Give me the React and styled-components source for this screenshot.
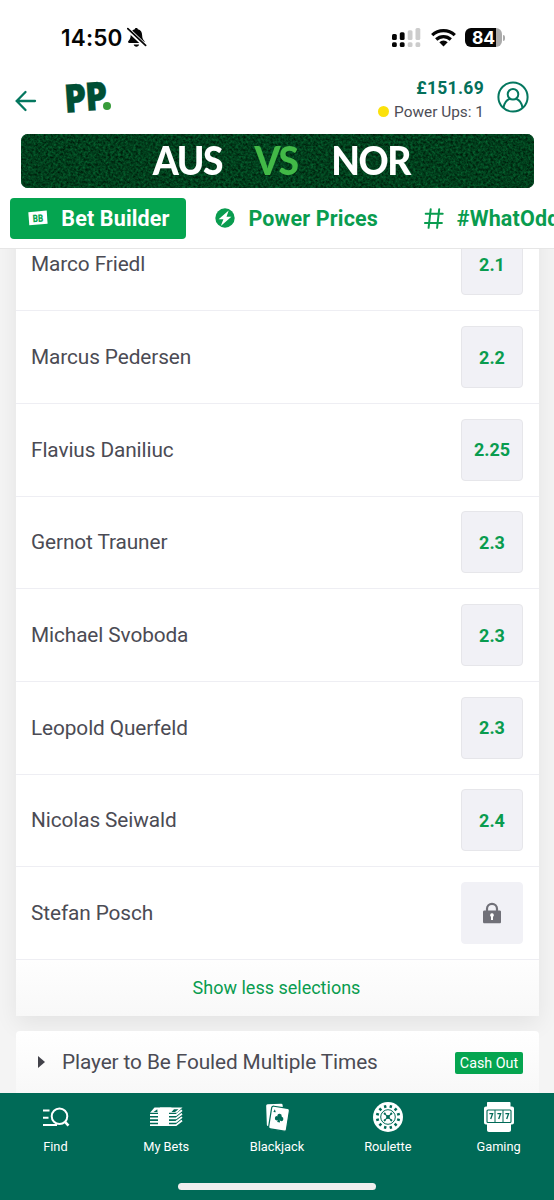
import React from "react";
import styled, { createGlobalStyle } from "styled-components";

const selections = [
  { name: "Marco Friedl", odds: "2.1" },
  { name: "Marcus Pedersen", odds: "2.2" },
  { name: "Flavius Daniliuc", odds: "2.25" },
  { name: "Gernot Trauner", odds: "2.3" },
  { name: "Michael Svoboda", odds: "2.3" },
  { name: "Leopold Querfeld", odds: "2.3" },
  { name: "Nicolas Seiwald", odds: "2.4" },
  { name: "Stefan Posch", locked: true },
];

const BellOffIcon = () => (
  <svg width="20" height="21" viewBox="0 0 20 21">
    <path
      d="M9.300 1c.9 0 1.400.5 1.500 1.200 3 .7 4.200 3 4.300 5.800.1 3.600 1 4.600 2.200 6 .7.800.3 2-.9 2H2.300c-1.200 0-1.700-1.100-.9-2 1.200-1.400 2.200-2.400 2.300-6C3.800 5.200 5 2.900 7.800 2.200 7.900 1.500 8.400 1 9.300 1zM6.700 17.500h5.400c-.3 1.400-1.300 2.200-2.700 2.200s-2.400-.8-2.700-2.200z"
      fill="#050505"
    />
    <path d="M0 1.500l18.500 17.500" stroke="#fff" strokeWidth="4.200" />
    <path d="M.8 1.600l17.800 16.800" stroke="#050505" strokeWidth="1.700" strokeLinecap="round" />
  </svg>
);

const SignalIcon = () => (
  <svg width="29" height="20" viewBox="0 0 29 20">
    <g fill="#050505">
      <rect x="0" y="6" width="4.800" height="6" rx="1.500" />
      <rect x="7.800" y="4.300" width="4.800" height="7.700" rx="1.500" />
      <rect x="0" y="14.300" width="4.800" height="4.800" rx="1.500" />
      <rect x="7.800" y="14.300" width="4.800" height="4.800" rx="1.500" />
    </g>
    <g fill="#ccc">
      <rect x="15.700" y="2.200" width="4.800" height="9.800" rx="1.500" />
      <rect x="23.500" y="0" width="4.800" height="12" rx="1.500" />
      <rect x="15.700" y="14.300" width="4.800" height="4.800" rx="1.500" />
      <rect x="23.500" y="14.300" width="4.800" height="4.800" rx="1.500" />
    </g>
  </svg>
);

const WifiIcon = () => (
  <svg width="25" height="19" viewBox="0 0 25 19">
    <g fill="none" stroke="#050505" strokeWidth="3.200">
      <path d="M1.200 7.200a16.200 16.200 0 0 1 22.600 0" />
      <path d="M5.200 11.500a10.500 10.500 0 0 1 14.600 0" />
    </g>
    <path d="M8.300 14.300a6.100 6.100 0 0 1 8.400 0l-4.200 4.200z" fill="#050505" />
  </svg>
);

const BackIcon = () => (
  <svg width="22" height="22" viewBox="0 0 22 22" fill="none" stroke="#04775f" strokeWidth="2.300" strokeLinecap="round">
    <path d="M20 11H2M10.500 2L1.700 11l8.800 9" />
  </svg>
);

const UserIcon = () => (
  <svg width="32" height="32" viewBox="0 0 32 32" fill="none" stroke="#04775f" strokeWidth="2">
    <circle cx="16" cy="16" r="14.600" />
    <circle cx="16" cy="13.200" r="5.300" />
    <path d="M6.500 26.700c.7-4.800 3.100-7.700 6.300-9M25.500 26.700c-.7-4.800-3.100-7.700-6.300-9" />
  </svg>
);

const GrassTexture = () => (
  <Grass width="513" height="54">
    <filter id="grass" x="0" y="0" width="100%" height="100%" colorInterpolationFilters="sRGB">
      <feTurbulence type="fractalNoise" baseFrequency="0.4" numOctaves="3" seed="7" />
      <feColorMatrix
        values="0.05 0 0 0 -0.02
                0.42 0 0 0 0.035
                0.22 0 0 0 0
                0 0 0 0 1"
      />
    </filter>
    <rect width="513" height="54" filter="url(#grass)" />
  </Grass>
);

const BetBuilderIcon = () => (
  <svg width="20" height="16" viewBox="0 0 20 16">
    <path d="M.3 2.200L18.700.4l.9 13.300-18.300 1.600z" fill="#fff" />
    <text
      x="4.700"
      y="12"
      fontFamily="Roboto, sans-serif"
      fontWeight="900"
      fontSize="10.500"
      textLength="10.500"
      lengthAdjust="spacingAndGlyphs"
      fill="#05a550"
      transform="rotate(-4 10 8)"
    >
      BB
    </text>
  </svg>
);

const BoltIcon = () => (
  <svg width="20" height="20" viewBox="0 0 20 20">
    <circle cx="10" cy="10" r="9.700" fill="#099c4f" />
    <path d="M13.700 2.500L3.600 11.300h4.800l-2.600 6.800 10.600-9.300h-4.900z" fill="#fff" />
  </svg>
);

const HashIcon = () => (
  <svg width="20" height="21" viewBox="0 0 20 21" stroke="#099c4f" strokeWidth="2" strokeLinecap="round">
    <path d="M6.700 1.200L4.600 19.800M15.200 1.200l-2.100 18.600M1.700 5.700h17M.9 15h17" />
  </svg>
);

const LockIcon = () => (
  <svg width="18" height="22" viewBox="0 0 18 22">
    <path d="M4 9V6.800a5 5 0 0 1 10 0V9" fill="none" stroke="#707078" strokeWidth="2.200" />
    <path
      d="M1.500 8.500h15c1 0 1.500.5 1.500 1.500v9.800c0 1-.5 1.500-1.500 1.500h-15c-1 0-1.500-.5-1.500-1.500V10c0-1 .5-1.500 1.500-1.500z"
      fill="#707078"
    />
    <path d="M9 11.300a1.900 1.900 0 0 1 1 3.500V18H8v-3.200a1.900 1.900 0 0 1 1-3.500z" fill="#fff" />
  </svg>
);

const FindIcon = () => (
  <svg width="32" height="32" viewBox="0 0 32 32" fill="none" stroke="#fff">
    <circle cx="20.500" cy="15.200" r="7.800" strokeWidth="2" />
    <path d="M25.800 20.600l3.700 4" strokeWidth="2.600" />
    <path d="M4 9.600h6.500M4 16.800h5.500M4 24h14" strokeWidth="2" />
  </svg>
);

const MyBetsIcon = () => (
  <svg width="34" height="32" viewBox="0 0 34 32">
    <path d="M5.500 6.500h28l-5.500 5.300H1z" fill="#fff" />
    <path d="M8.300 8.300l-3.800 2.600h4zM25 8.300h4.500l-3.500 2.600h-3.500z" fill="#006a57" />
    <g stroke="#fff" strokeWidth="1.800" fill="none">
      <path d="M1 14h26l6-4.700M1 17.400h26l6-4.700M1 20.800h26l6-4.700M1 24.200h26l6-4.700" />
    </g>
    <path d="M11 6.500h11.500l-2.500 5v13.600H9V11.500z" fill="#fff" />
  </svg>
);

const BlackjackIcon = () => (
  <svg width="32" height="32" viewBox="0 0 32 32">
    <rect x="5.500" y="3" width="16.500" height="22" rx="1.500" fill="#fff" transform="rotate(-2 14 14)" />
    <rect
      x="9"
      y="6.200"
      width="18"
      height="23"
      rx="2"
      fill="#fff"
      stroke="#006a57"
      strokeWidth="1.200"
      transform="rotate(9 18 18)"
    />
    <g fill="#006a57" transform="rotate(8 18 17)">
      <circle cx="18.200" cy="14.900" r="2.200" />
      <circle cx="16.100" cy="17.600" r="2.200" />
      <circle cx="20.300" cy="17.600" r="2.200" />
      <path d="M18.200 16l1.500 5.200h-3z" />
      <path d="M11.500 11.800l1.200-2.800 1.300 2.800z" />
    </g>
  </svg>
);

const dots = [0, 30, 60, 90, 120, 150, 180, 210, 240, 270, 300, 330];

const RouletteIcon = () => (
  <svg width="32" height="32" viewBox="0 0 32 32">
    <circle cx="16" cy="16" r="15" fill="#fff" />
    {dots.map((angle) => (
      <rect
        key={angle}
        x="14.800"
        y="3.800"
        width="2.400"
        height="2.800"
        fill="#006a57"
        transform={`rotate(${angle + 15} 16 16)`}
      />
    ))}
    <circle cx="16" cy="16" r="7.300" fill="none" stroke="#006a57" strokeWidth="1" />
    <path d="M12.800 12.800l6.400 6.400M19.200 12.800l-6.400 6.400" stroke="#006a57" strokeWidth="1.100" />
    <g fill="#006a57">
      <circle cx="16" cy="16" r="1.900" />
      <circle cx="12.700" cy="12.700" r="1.100" />
      <circle cx="19.300" cy="12.700" r="1.100" />
      <circle cx="12.700" cy="19.300" r="1.100" />
      <circle cx="19.300" cy="19.300" r="1.100" />
    </g>
  </svg>
);

const GamingIcon = () => (
  <svg width="32" height="32" viewBox="0 0 32 32">
    <path
      d="M5 1h21.500c.7 0 1 .3 1 1v3.500h1.500c1.200 0 2 .8 2 2v14c0 1.200-.8 2-2 2h-1V29c0 1.200-.8 2-2 2H6c-1.200 0-2-.8-2-2v-5.500H3c-1.200 0-2-.8-2-2v-14c0-1.200.8-2 2-2h1V2c0-.7.3-1 1-1z"
      fill="#fff"
    />
    <rect x="4" y="9" width="24" height="12.500" rx="1" fill="#fff" stroke="#006a57" strokeWidth="1.100" />
    <path d="M12 9v12.500M20 9v12.500" stroke="#006a57" strokeWidth="1" />
    <path
      d="M6.400 12.700h3.200l-1.900 5.300M14.400 12.700h3.200l-1.900 5.300M22.400 12.700h3.200l-1.900 5.300"
      fill="none"
      stroke="#006a57"
      strokeWidth="1.300"
    />
  </svg>
);

const navItems = [
  { label: "Find", Icon: FindIcon },
  { label: "My Bets", Icon: MyBetsIcon },
  { label: "Blackjack", Icon: BlackjackIcon },
  { label: "Roulette", Icon: RouletteIcon },
  { label: "Gaming", Icon: GamingIcon },
];

const App = () => {
  return (
    <StyledScreen>
      <GlobalStyle />
      <StatusBar>
        <Clock>14:50</Clock>
        <BellOffIcon />
        <StatusIcons>
          <SignalIcon />
          <WifiIcon />
          <Battery>
            <BatteryBody>84</BatteryBody>
            <BatteryTip />
          </Battery>
        </StatusIcons>
      </StatusBar>

      <Header>
        <BackIcon />
        <Logo>
          <LogoLetter>P</LogoLetter>
          <LogoLetter $raised>P</LogoLetter>
          <LogoDot />
        </Logo>
        <Account>
          <Balance>£151.69</Balance>
          <PowerUps>
            <Coin />
            Power Ups: 1
          </PowerUps>
        </Account>
        <Profile>
          <UserIcon />
        </Profile>
      </Header>

      <Banner>
        <GrassTexture />
        <Team $width="69px">AUS</Team>
        <Team $width="44px" $green>
          VS
        </Team>
        <Team $width="81px">NOR</Team>
      </Banner>

      <Tabs>
        <Tab $active>
          <BetBuilderIcon />
          Bet Builder
        </Tab>
        <Tab>
          <BoltIcon />
          Power Prices
        </Tab>
        <Tab>
          <HashIcon />
          #WhatOddsPaddy
        </Tab>
      </Tabs>

      <Content>
        <Card>
          {selections.map(({ name, odds, locked }) => (
            <Row key={name}>
              <Player>{name}</Player>
              <Odds $locked={locked}>{locked ? <LockIcon /> : odds}</Odds>
            </Row>
          ))}
          <ShowLess>Show less selections</ShowLess>
        </Card>
        <Market>
          <Caret />
          <MarketName>Player to Be Fouled Multiple Times</MarketName>
          <CashOut>Cash Out</CashOut>
        </Market>
      </Content>

      <BottomNav>
        <NavItems>
          {navItems.map(({ label, Icon }) => (
            <NavItem key={label}>
              <Icon />
              {label}
            </NavItem>
          ))}
        </NavItems>
        <HomeIndicator />
      </BottomNav>
    </StyledScreen>
  );
};

export default App;

const GlobalStyle = createGlobalStyle`
  * {
    box-sizing: border-box;
  }
  body {
    margin: 0;
    background: #fff;
  }
  svg {
    display: block;
    flex-shrink: 0;
  }
`;

const StyledScreen = styled.div`
  width: 554px;
  height: 1200px;
  display: flex;
  flex-direction: column;
  overflow: hidden;
  background: #fff;
  font-family: Roboto, "Liberation Sans", sans-serif;
`;

const StatusBar = styled.div`
  height: 75px;
  flex-shrink: 0;
  display: flex;
  align-items: center;
  padding: 0 49px 0 61px;
`;

const Clock = styled.span`
  width: 66px;
  font-family: Inter, sans-serif;
  font-size: 22.5px;
  font-weight: 600;
  letter-spacing: 0.2px;
  color: #050505;
`;

const StatusIcons = styled.div`
  margin-left: auto;
  display: flex;
  align-items: center;
  gap: 9.5px;
`;

const Battery = styled.div`
  display: flex;
  align-items: center;
  gap: 1px;
`;

const BatteryBody = styled.div`
  width: 37px;
  height: 19px;
  border-radius: 6px;
  background: linear-gradient(90deg, #050505 31px, #aaa 31px);
  color: #fff;
  font-family: Inter, sans-serif;
  font-size: 17.5px;
  font-weight: 700;
  line-height: 19px;
  text-align: center;
`;

const BatteryTip = styled.div`
  width: 2px;
  height: 6px;
  border-radius: 0 2px 2px 0;
  background: #aaa;
`;

const Header = styled.header`
  height: 58px;
  flex-shrink: 0;
  display: flex;
  align-items: center;
  padding: 0 25px 7px 15px;
`;

const Logo = styled.div`
  display: flex;
  align-items: flex-end;
  margin: -7px 0 0 27px;
`;

const LogoLetter = styled.span`
  width: 20.5px;
  margin-bottom: ${({ $raised }) => ($raised ? "2px" : "0")};
  transform: rotate(-4deg) scaleX(0.9);
  transform-origin: left center;
  font-family: "Open Sans", sans-serif;
  font-weight: 800;
  font-size: 39.5px;
  line-height: 38px;
  color: #004f35;
  -webkit-text-stroke: 0.3px #004f35;
`;

const LogoDot = styled.i`
  width: 8px;
  height: 8px;
  margin: 0 0 7px -2px;
  border-radius: 50%;
  background: #389c3b;
`;

const Account = styled.div`
  margin: -2px 13px 0 auto;
  display: flex;
  flex-direction: column;
  align-items: flex-end;
`;

const Balance = styled.div`
  font-size: 17.5px;
  line-height: 24px;
  font-weight: 700;
  letter-spacing: 0.3px;
  color: #04705a;
`;

const PowerUps = styled.div`
  display: flex;
  align-items: center;
  gap: 5px;
  font-size: 15.4px;
  line-height: 24px;
  color: #4d4d55;
`;

const Coin = styled.i`
  width: 11px;
  height: 11px;
  border-radius: 50%;
  background: #fbe10b;
`;

const Profile = styled.div`
  padding-bottom: 7px;
`;

const Banner = styled.div`
  position: relative;
  width: 513px;
  height: 54px;
  flex-shrink: 0;
  margin: 0.5px 0 0 20.5px;
  display: flex;
  justify-content: center;
  gap: 32px;
  padding-left: 10px;
  border-radius: 7px;
  overflow: hidden;
  background: #023f1e;
`;

const Grass = styled.svg`
  position: absolute;
  inset: 0;
`;

const Team = styled.span`
  position: relative;
  width: ${({ $width }) => $width};
  display: flex;
  justify-content: center;
  transform: scaleX(0.94);
  font-family: Lato, sans-serif;
  font-size: 39.5px;
  font-weight: 900;
  line-height: 51px;
  letter-spacing: -1.5px;
  color: ${({ $green }) => ($green ? "#42b947" : "#fff")};
`;

const Tabs = styled.nav`
  height: 61px;
  flex-shrink: 0;
  display: flex;
  gap: 11.5px;
  padding: 10px 0 0 10px;
  border-bottom: 1px solid #e6e6e6;
  overflow: hidden;
`;

const Tab = styled.div`
  height: 41.5px;
  flex-shrink: 0;
  display: flex;
  align-items: center;
  gap: 13px;
  padding: 0 16px 0 18.3px;
  border-radius: 4px;
  background: ${({ $active }) => ($active ? "#05a550" : "transparent")};
  color: ${({ $active }) => ($active ? "#fff" : "#099c4f")};
  font-size: 21.5px;
  font-weight: 700;
  letter-spacing: 0.15px;
  white-space: nowrap;
`;

const Content = styled.main`
  flex: 1;
  min-height: 0;
  display: flex;
  flex-direction: column;
  gap: 15px;
  padding: 0 15px 0 16px;
  background: #f4f4f4;
  overflow: hidden;
`;

const Card = styled.section`
  flex-shrink: 0;
  margin-top: -30px;
  background: #fff;
  box-shadow: 0 8px 22px rgba(0, 0, 0, 0.07);
`;

const Row = styled.div`
  height: 92.7px;
  display: flex;
  align-items: center;
  justify-content: space-between;
  padding: 0 16px 0 15px;
  border-bottom: 1px solid #eeeef3;
`;

const Player = styled.span`
  font-size: 20.8px;
  letter-spacing: -0.1px;
  color: #4b4b54;
`;

const Odds = styled.div`
  width: 62px;
  height: 62px;
  display: flex;
  align-items: center;
  justify-content: center;
  border: 1px solid ${({ $locked }) => ($locked ? "#f1f1f6" : "#e6e6ea")};
  border-radius: 4px;
  background: #f1f1f6;
  color: #099c4f;
  font-size: 18px;
  font-weight: 700;
`;

const ShowLess = styled.div`
  height: 56px;
  display: flex;
  align-items: center;
  justify-content: center;
  padding: 0 2px 1px 0;
  background: linear-gradient(#fefefe, #f8f8f8);
  color: #099c4f;
  font-size: 18px;
`;

const Market = styled.section`
  height: 62px;
  flex-shrink: 0;
  display: flex;
  align-items: center;
  padding: 0 16px 0 22px;
  border-radius: 4px 4px 0 0;
  background: linear-gradient(#fff, #f8f8f8);
`;

const Caret = styled.i`
  border-left: 7px solid #42424a;
  border-top: 6px solid transparent;
  border-bottom: 6px solid transparent;
`;

const MarketName = styled.span`
  margin-left: 17px;
  font-size: 20.8px;
  letter-spacing: -0.1px;
  color: #4b4b54;
`;

const CashOut = styled.span`
  width: 68px;
  height: 22px;
  margin: 2px 0 0 auto;
  border-radius: 2px;
  background: #05a550;
  color: #fff;
  font-size: 14.3px;
  line-height: 22px;
  text-align: center;
  white-space: nowrap;
`;

const BottomNav = styled.nav`
  height: 107px;
  flex-shrink: 0;
  display: flex;
  flex-direction: column;
  align-items: center;
  background: #006a57;
`;

const NavItems = styled.div`
  width: 100%;
  height: 90px;
  display: grid;
  grid-template-columns: repeat(5, 1fr);
`;

const NavItem = styled.div`
  display: flex;
  flex-direction: column;
  align-items: center;
  gap: 5px;
  padding-top: 8px;
  color: #fff;
  font-size: 12.8px;
  line-height: 17px;
`;

const HomeIndicator = styled.div`
  width: 198px;
  height: 7px;
  border-radius: 4px;
  background: #f0eeee;
`;
